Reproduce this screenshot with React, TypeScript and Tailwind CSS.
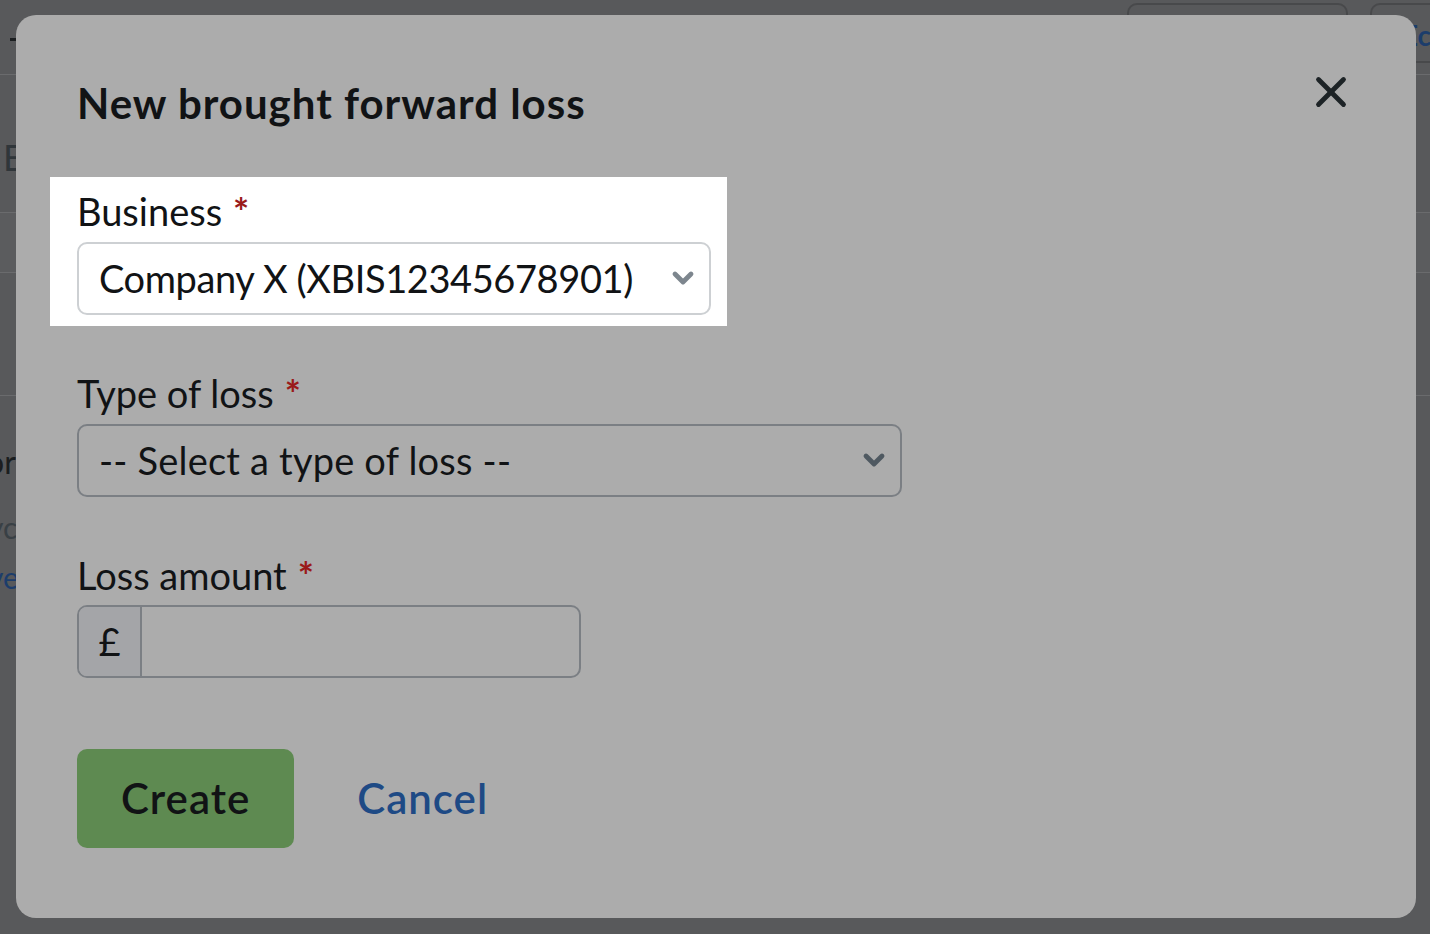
import { X, ChevronDown } from 'lucide-react';

const labelFont = { fontFamily: "Lato, 'Noto Sans', sans-serif" };

function Label({ text }: { text: string }) {
  return (
    <label className="block text-[38px] leading-[1.2] text-[#111315]" style={labelFont}>
      {text}<span className="ml-[11px] font-bold text-[#9a1a1a]">*</span>
    </label>
  );
}

function SelectBox({ value, width, border, chevron, tracking }: { value: string; width: string; border: string; chevron: string; tracking: string }) {
  return (
    <div className={`mt-[7px] h-[73px] ${width} ${border} border-2 rounded-[10px] flex items-center justify-between pl-[20px] pr-[10px]`}>
      <span className={`text-[38px] leading-none text-[#111315] whitespace-nowrap ${tracking}`} style={labelFont}>{value}</span>
      <ChevronDown className={`w-[32px] h-[32px] ${chevron}`} strokeWidth={3.6} />
    </div>
  );
}

export default function App() {
  return (
    <div className="relative h-[934px] w-[1430px] overflow-hidden bg-[#58595b]" style={labelFont}>
      {/* page behind the overlay */}
      <div className="flex flex-col h-full">
        <div className="h-[75px] flex justify-between border-b border-[#6a6b6d]">
          <div className="pl-[10px] pt-[38px]"><div className="w-[8px] h-[3px] bg-[#1c1f21]" /></div>
          <div className="flex gap-[22px] pt-[3px]">
            <div className="w-[221px] h-[60px] rounded-[10px] border-2 border-[#48494b]" />
            <div className="w-[60px] h-[60px] rounded-l-[10px] border-2 border-r-0 border-[#48494b] pl-[30px] pt-[16px] text-[28px] font-bold text-[#1c3d6b] leading-none">Ec</div>
          </div>
        </div>
        <div className="h-[137px] pl-[3px] pt-[64px] text-[36px] leading-none text-[#30363a]">E</div>
        <div className="h-[61px] border-y border-[#6a6b6d] bg-[#5b5c5e]" />
        <div className="h-[123px] border-b border-[#6a6b6d]" />
        <div className="-ml-[14px] pt-[50px] text-[32px] leading-none text-[#1b1e20]">or</div>
        <div className="-ml-[12px] pt-[34px] text-[30px] leading-none text-[#394045]">yc</div>
        <div className="-ml-[12px] pt-[20px] text-[30px] leading-none text-[#1c3d6b]">ve</div>
      </div>

      {/* modal */}
      <div className="absolute left-[16px] top-[15px] w-[1400px] h-[903px] rounded-[20px] bg-[#acacac] px-[61px] pt-[63px]">
        <button className="absolute right-[60px] top-[52px] text-[#1d2326]">
          <X className="w-[50px] h-[50px]" strokeWidth={2.3} />
        </button>

        <h1 className="text-[42px] leading-[1.2] font-bold text-[#111315] tracking-[1px]">New brought forward loss</h1>

        <div className="mt-[49px] -ml-[27px] w-fit bg-white pl-[27px] pr-[16px] pt-[12px] pb-[11px]">
          <Label text="Business" />
          <SelectBox value="Company X (XBIS12345678901)" width="w-[634px]" border="border-[#cdd0d3]" chevron="text-[#7d868e]" tracking="tracking-[-0.4px]" />
        </div>

        <div className="mt-[45px]">
          <Label text="Type of loss" />
          <SelectBox value="-- Select a type of loss --" width="w-[825px]" border="border-[#7b7f84]" chevron="text-[#4f5961]" tracking="tracking-[0.2px]" />
        </div>

        <div className="mt-[56px]">
          <Label text="Loss amount" />
          <div className="mt-[7px] flex h-[73px] w-[504px] border-2 border-[#7b7f84] rounded-[10px] overflow-hidden">
            <div className="w-[63px] shrink-0 bg-[#a4a5a8] border-r-2 border-[#7b7f84] flex items-center justify-center text-[38px] text-[#111315]">£</div>
            <input className="flex-1 min-w-0 bg-transparent outline-none px-4 text-[38px]" />
          </div>
        </div>

        <div className="mt-[71px] flex items-center gap-[63px]">
          <button className="h-[99px] px-[44px] rounded-[10px] bg-[#5e8a51] text-[42px] font-semibold text-[#111315] tracking-[1px]">Create</button>
          <button className="text-[42px] font-semibold text-[#1e4a85] tracking-[1px]">Cancel</button>
        </div>
      </div>
    </div>
  );
}
